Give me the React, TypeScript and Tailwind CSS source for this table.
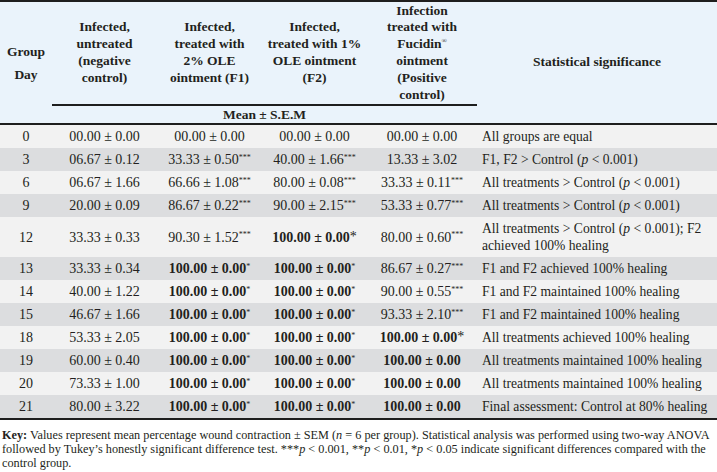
import React from 'react';

type Cell = { v: string; bold?: boolean; sup?: string; star?: boolean };

interface Row {
  day: string;
  cells: Cell[];
  note: React.ReactNode;
}

const P = () => <i>p</i>;

const c = (v: string, sup?: string): Cell => ({ v, sup });
const b = (v: string, sup?: string, star?: boolean): Cell => ({ v, bold: true, sup, star });

const rows: Row[] = [
  { day: '0', cells: [c('00.00 ± 0.00'), c('00.00 ± 0.00'), c('00.00 ± 0.00'), c('00.00 ± 0.00')], note: 'All groups are equal' },
  { day: '3', cells: [c('06.67 ± 0.12'), c('33.33 ± 0.50', '***'), c('40.00 ± 1.66', '***'), c('13.33 ± 3.02')], note: <>F1, F2 &gt; Control (<P /> &lt; 0.001)</> },
  { day: '6', cells: [c('06.67 ± 1.66'), c('66.66 ± 1.08', '***'), c('80.00 ± 0.08', '***'), c('33.33 ± 0.11', '***')], note: <>All treatments &gt; Control (<P /> &lt; 0.001)</> },
  { day: '9', cells: [c('20.00 ± 0.09'), c('86.67 ± 0.22', '***'), c('90.00 ± 2.15', '***'), c('53.33 ± 0.77', '***')], note: <>All treatments &gt; Control (<P /> &lt; 0.001)</> },
  { day: '12', cells: [c('33.33 ± 0.33'), c('90.30 ± 1.52', '***'), b('100.00 ± 0.00', undefined, true), c('80.00 ± 0.60', '***')], note: <>All treatments &gt; Control (<P /> &lt; 0.001); F2<br />achieved 100% healing</> },
  { day: '13', cells: [c('33.33 ± 0.34'), b('100.00 ± 0.00', '*'), b('100.00 ± 0.00', '*'), c('86.67 ± 0.27', '***')], note: 'F1 and F2 achieved 100% healing' },
  { day: '14', cells: [c('40.00 ± 1.22'), b('100.00 ± 0.00', '*'), b('100.00 ± 0.00', '*'), c('90.00 ± 0.55', '***')], note: 'F1 and F2 maintained 100% healing' },
  { day: '15', cells: [c('46.67 ± 1.66'), b('100.00 ± 0.00', '*'), b('100.00 ± 0.00', '*'), c('93.33 ± 2.10', '***')], note: 'F1 and F2 maintained 100% healing' },
  { day: '18', cells: [c('53.33 ± 2.05'), b('100.00 ± 0.00', '*'), b('100.00 ± 0.00', '*'), b('100.00 ± 0.00', undefined, true)], note: 'All treatments achieved 100% healing' },
  { day: '19', cells: [c('60.00 ± 0.40'), b('100.00 ± 0.00', '*'), b('100.00 ± 0.00', '*'), b('100.00 ± 0.00')], note: 'All treatments maintained 100% healing' },
  { day: '20', cells: [c('73.33 ± 1.00'), b('100.00 ± 0.00', '*'), b('100.00 ± 0.00', '*'), b('100.00 ± 0.00')], note: 'All treatments maintained 100% healing' },
  { day: '21', cells: [c('80.00 ± 3.22'), b('100.00 ± 0.00', '*'), b('100.00 ± 0.00', '*'), b('100.00 ± 0.00')], note: 'Final assessment: Control at 80% healing' },
];

// header lines broken as in the printed table
const groups: string[][] = [
  ['Infected,', 'untreated', '(negative', 'control)'],
  ['Infected,', 'treated with', '2% OLE', 'ointment (F1)'],
  ['Infected,', 'treated with 1%', 'OLE ointment', '(F2)'],
];

export default function App() {
  return (
    <div className="w-[717px] bg-white text-[#231f20] font-['Liberation_Serif',serif]">
      <table className="w-[717px] table-fixed border-collapse font-['Liberation_Serif',serif] text-[14px] leading-[17px] text-[#231f20]">
        <colgroup>
          <col className="w-[52px]" />
          <col className="w-[105px]" />
          <col className="w-[105px]" />
          <col className="w-[105px]" />
          <col className="w-[110px]" />
          <col className="w-[240px]" />
        </colgroup>
        <thead className="bg-[#eaf3fb] border-t-2 border-b-2 border-[#1e1e1e] text-[13.5px] leading-[16.8px]">
          <tr>
            <th rowSpan={2} className="font-bold text-center leading-[23px] align-middle">
              Group
              <br />
              Day
            </th>
            {groups.map((g, i) => (
              <th key={i} className="font-bold text-center align-middle h-[104px] border-b-2 border-[#1e1e1e] whitespace-nowrap">
                {g.map((line, k) => (
                  <div key={k}>{line}</div>
                ))}
              </th>
            ))}
            <th className="font-bold text-center align-middle border-b-2 border-[#1e1e1e] whitespace-nowrap">
              <div>Infection</div>
              <div>treated with</div>
              <div>
                Fucidin<sup className="text-[7px] font-normal top-[-0.8em]">®</sup>
              </div>
              <div>ointment</div>
              <div>(Positive</div>
              <div>control)</div>
            </th>
            <th rowSpan={2} className="font-bold text-center align-middle">
              Statistical significance
            </th>
          </tr>
          <tr>
            <th colSpan={4} className="font-bold text-center h-[19px] leading-[17px]">
              Mean ± S.E.M
            </th>
          </tr>
        </thead>
        <tbody className="border-b-2 border-[#1e1e1e]">
          {rows.map((r, i) => (
            <tr key={r.day} className={i % 2 === 0 ? 'bg-[#f2f2f2]' : 'bg-[#dcdddf]'}>
              <td className="text-center py-[3px]">{r.day}</td>
              {r.cells.map((cell, j) => (
                <td key={j} className={`text-center py-[3px] whitespace-nowrap ${cell.bold ? 'font-bold' : ''}`}>
                  {cell.v}
                  {cell.star && <span className="font-normal relative top-[-1px]">*</span>}
                  {cell.sup && <sup className="text-[8px] font-normal top-[-0.55em]">{cell.sup}</sup>}
                </td>
              ))}
              <td className="text-left py-[3px] pl-[5px] whitespace-nowrap text-[13.6px]">{r.note}</td>
            </tr>
          ))}
        </tbody>
      </table>
      <p className="pt-[8px] pl-[2px] pr-[4px] text-[12.25px] leading-[14px] font-['Liberation_Serif',serif]">
        <b>Key:</b> Values represent mean percentage wound contraction ± SEM (<i>n</i> = 6 per group). Statistical analysis was performed using two-way ANOVA followed by Tukey’s honestly significant difference test. ***<i>p</i> &lt; 0.001, **<i>p</i> &lt; 0.01, *<i>p</i> &lt; 0.05 indicate significant differences compared with the control group.
      </p>
    </div>
  );
}
